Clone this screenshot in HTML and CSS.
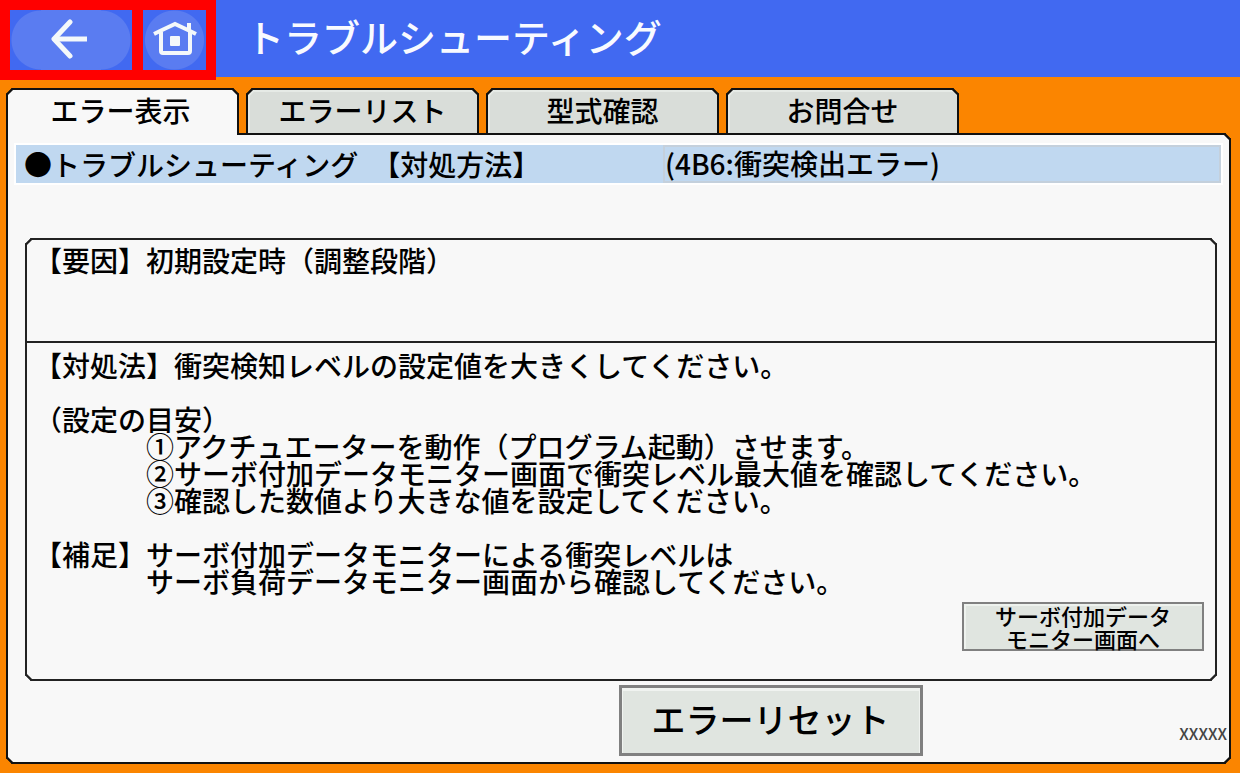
FILE: index.html
```html
<!DOCTYPE html>
<html lang="ja">
<head>
    <meta charset="UTF-8">
    <title>トラブルシューティング</title>
    <link rel="stylesheet" href="styles.css">
</head>
<body>
    <header class="header">
        <nav class="headerNav">
            <button class="navButton back" aria-label="戻る">
                <svg width="38" height="40" viewBox="0 0 38 40" fill="none" stroke="#f4f8fa" stroke-width="5">
                    <path d="M19 3 L3 20 L19 37" stroke-linecap="round" stroke-linejoin="round"/>
                    <path d="M3 20 H36"/>
                </svg>
            </button>
            <button class="navButton home" aria-label="ホーム">
                <svg width="44" height="38" viewBox="0 0 44 38" fill="none" stroke="#f4f8fa" stroke-width="4">
                    <path d="M1 14 L7 11 L22 4 L37 11 L43 14 M8 12 V31 Q8 33 10 33 H35 Q37 33 37 31 V12 M36 3 V11"/>
                    <rect x="17" y="16" width="10" height="10" rx="1" fill="#f4f8fa" stroke="none"/>
                </svg>
            </button>
        </nav>
        <h1>トラブルシューティング</h1>
    </header>
    <div class="tabs">
        <button class="tab active">エラー表示</button>
        <button class="tab">エラーリスト</button>
        <button class="tab">型式確認</button>
        <button class="tab">お問合せ</button>
    </div>
    <main class="panel">
        <div class="titleBar">
            <h2 class="titleName"><span>●トラブルシューティング</span><span>【対処方法】</span></h2>
            <div class="titleError">(4B6:衝突検出エラー)</div>
        </div>
        <div class="detail">
            <section class="cause">
                <p>【要因】初期設定時（調整段階）</p>
            </section>
            <section class="remedy">
                <p>【対処法】衝突検知レベルの設定値を大きくしてください。</p>
                <div class="guide">
                    <p>（設定の目安）</p>
                    <p class="indent">①アクチュエーターを動作（プログラム起動）させます。</p>
                    <p class="indent">②サーボ付加データモニター画面で衝突レベル最大値を確認してください。</p>
                    <p class="indent">③確認した数値より大きな値を設定してください。</p>
                </div>
                <p>【補足】サーボ付加データモニターによる衝突レベルは</p>
                <p class="indent">サーボ負荷データモニター画面から確認してください。</p>
                <button class="monitor">サーボ付加データ<br>モニター画面へ</button>
            </section>
        </div>
        <footer class="footer">
            <button class="reset">エラーリセット</button>
            <span class="version">XXXXX</span>
        </footer>
    </main>
</body>
</html>
```
FILE: styles.css
```css
* {
    box-sizing: border-box;
}
body {
    margin: 0;
    min-height: 100vh;
    display: flex;
    flex-direction: column;
    background-color: #fb8500;
    color: black;
    font-family: "Noto Sans CJK JP", sans-serif;
    font-size: 28px;
    font-weight: 500;
    text-spacing-trim: space-all;
}
h1, h2, p {
    margin: 0;
    font-weight: inherit;
}
button {
    padding: 0;
    font-family: inherit;
    font-weight: inherit;
    color: inherit;
}

.header {
    height: 77px;
    display: flex;
    align-items: flex-start;
    gap: 30px;
    background-color: #4169f1;
}
.headerNav {
    display: flex;
    gap: 11px;
    padding: 10px;
    background-color: #ff0000;
}
.navButton {
    height: 60px;
    border: none;
    display: flex;
    justify-content: center;
    align-items: center;
    background: #4169f1;
}
.back {
    width: 122px;
    padding: 0 2px 2px 0;
    background: radial-gradient(circle at 31px 30px, #5a7cf1 29px, transparent 30px),
        radial-gradient(circle at 91px 30px, #5a7cf1 29px, transparent 30px),
        linear-gradient(to right, #4169f1 31px, #5a7cf1 31px, #5a7cf1 91px, #4169f1 91px);
}
.home {
    width: 63px;
    padding-bottom: 2px;
    background: radial-gradient(circle, #5a7cf1 29px, #4169f1 30px);
}
.header h1 {
    color: #f8faff;
    font-size: 38px;
    line-height: 72px;
}

.tabs {
    display: flex;
    gap: 7px;
    padding: 11px 9px 0 6px;
}
.tab {
    width: 233px;
    height: 45px;
    padding-bottom: 4px;
    border: 2px solid #111111;
    border-bottom: none;
    border-radius: 6px 6px 0 0;
    corner-shape: bevel;
    background-color: #d9ddd9;
    box-shadow: inset 1px 1px 0 1px #e6eae6;
    font-size: 28px;
    line-height: 38px;
}
.tab.active {
    position: relative;
    height: 47px;
    margin-bottom: -2px;
    padding: 0 4px 6px 0;
    background-color: #f8f8f8;
    box-shadow: none;
}

.panel {
    flex: 1;
    display: flex;
    flex-direction: column;
    margin: 0 9px 9px 6px;
    padding-bottom: 6px;
    border: 2px solid #111111;
    border-radius: 0 6px 6px 6px;
    corner-shape: bevel;
    background-color: #f8f8f8;
}
.titleBar {
    display: grid;
    grid-template-columns: 647fr 558fr;
    margin: 10px 8px 0;
    background-color: #c0d8f0;
    box-shadow: 0 0 0 2px white;
    line-height: 38px;
}
.titleName {
    display: flex;
    gap: 14px;
    padding-left: 8px;
    font-size: 28px;
}
.titleError {
    padding-left: 2px;
    box-shadow: inset 0 0 0 2px #c4d0dc;
    line-height: 36px;
}

.detail {
    flex: 1;
    display: flex;
    flex-direction: column;
    margin: 55px 12px 0 17px;
    border: 2px solid #222222;
    border-radius: 6px;
    corner-shape: bevel;
    line-height: 27px;
}
.cause {
    height: 103px;
    padding: 7px;
    border-bottom: 2px solid #222222;
}
.remedy {
    flex: 1;
    display: flex;
    flex-direction: column;
    padding: 9px 11px 28px 7px;
}
.guide {
    margin: 27px 0;
}
.indent {
    padding-left: 112px;
}
.monitor {
    width: 242px;
    height: 49px;
    margin-top: auto;
    align-self: flex-end;
    border: 2px solid #808080;
    background-color: #e0e5e0;
    box-shadow: inset 1px 1px 0 1px #eef2ee;
    font-size: 22px;
    line-height: 23px;
}

.footer {
    display: flex;
    justify-content: space-between;
    align-items: center;
    margin: 4px 2px 0 50%;
}
.reset {
    width: 304px;
    height: 71px;
    padding-bottom: 4px;
    border: 3px solid #808080;
    background-color: #e0e5e0;
    box-shadow: inset 0 2px 0 1px #f0f3f0;
    font-size: 34px;
}
.version {
    padding-top: 24px;
    color: #444444;
    font-size: 16px;
}
```
